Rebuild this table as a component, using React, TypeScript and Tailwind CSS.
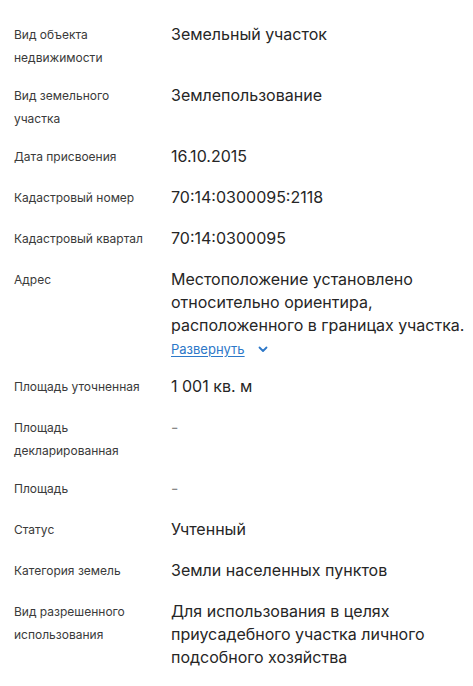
import React from 'react'

type Row = { label: string; value: string; expand?: boolean }

const rows: Row[] = [
  { label: 'Вид объекта недвижимости', value: 'Земельный участок' },
  { label: 'Вид земельного участка', value: 'Землепользование' },
  { label: 'Дата присвоения', value: '16.10.2015' },
  { label: 'Кадастровый номер', value: '70:14:0300095:2118' },
  { label: 'Кадастровый квартал', value: '70:14:0300095' },
  {
    label: 'Адрес',
    value: 'Местоположение установлено относительно ориентира, расположенного в границах участка.',
    expand: true,
  },
  { label: 'Площадь уточненная', value: '1 001 кв. м' },
  { label: 'Площадь декларированная', value: '-' },
  { label: 'Площадь', value: '-' },
  { label: 'Статус', value: 'Учтенный' },
  { label: 'Категория земель', value: 'Земли населенных пунктов' },
  {
    label: 'Вид разрешенного использования',
    value: 'Для использования в целях приусадебного участка личного подсобного хозяйства',
  },
]

export default function App() {
  return (
    <div className="min-h-[686px] w-full bg-white pt-[23px] pl-[14px] pr-2 font-['Inter','Liberation_Sans',sans-serif]">
      {rows.map(row => (
        <div key={row.label} className="flex min-h-[41px] pb-[15px]">
          <div className="w-[157px] shrink-0 pr-4 text-[12px] leading-[23px] text-[#3a3a3a]">{row.label}</div>
          <div className="flex-1 text-[16px] leading-[23px] text-[#262626]">
            {row.value === '-' ? <span className="text-[#888]">-</span> : row.value}
            {row.expand && (
              <div className="flex h-[23px] items-center gap-3 text-[13px] leading-[20px]">
                <span className="text-[#2d78c8] underline underline-offset-2">Развернуть</span>
                <svg width="12" height="12" viewBox="0 0 12 12" fill="none">
                  <path d="M2.5 4.5 6 8l3.5-3.5" stroke="#2d78c8" strokeWidth="1.8" strokeLinecap="round" strokeLinejoin="round" />
                </svg>
              </div>
            )}
          </div>
        </div>
      ))}
    </div>
  )
}
